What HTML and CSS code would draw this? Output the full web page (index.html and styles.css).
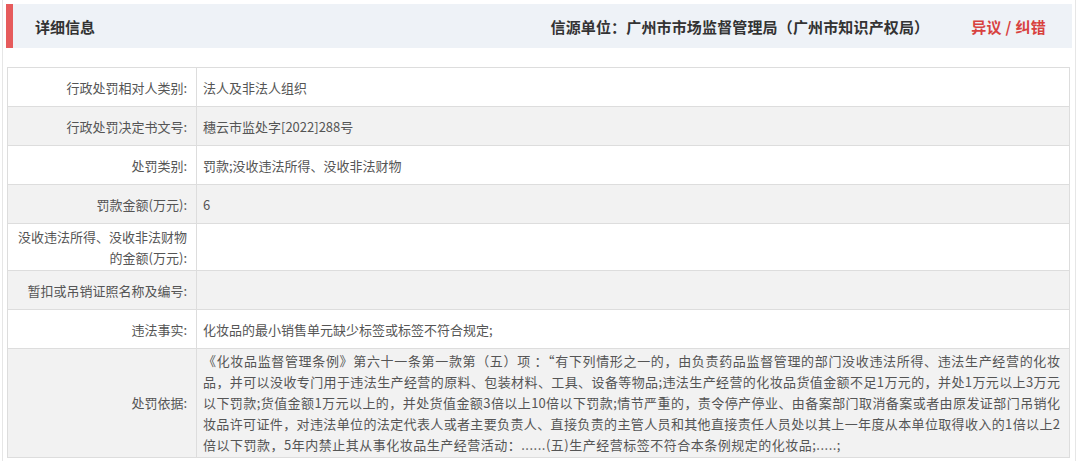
FILE: index.html
```html
<!DOCTYPE html>
<html lang="zh-CN">
<head>
<meta charset="utf-8">
<title>详细信息</title>
<link rel="stylesheet" href="styles.css">
</head>
<body>
<div class="page">
  <div class="header">
    <div class="title">详细信息</div>
    <div class="source">信源单位：广州市市场监督管理局（广州市知识产权局）</div>
    <a class="objection">异议 / 纠错</a>
  </div>
  <table class="info">
    <tr><td class="label">行政处罚相对人类别:</td><td class="value">法人及非法人组织</td></tr>
    <tr class="alt"><td class="label">行政处罚决定书文号:</td><td class="value">穗云市监处字[2022]288号</td></tr>
    <tr><td class="label">处罚类别:</td><td class="value">罚款;没收违法所得、没收非法财物</td></tr>
    <tr class="alt"><td class="label">罚款金额(万元):</td><td class="value">6</td></tr>
    <tr><td class="label">没收违法所得、没收非法财物的金额(万元):</td><td class="value"></td></tr>
    <tr class="alt"><td class="label">暂扣或吊销证照名称及编号:</td><td class="value"></td></tr>
    <tr><td class="label">违法事实:</td><td class="value">化妆品的最小销售单元缺少标签或标签不符合规定;</td></tr>
    <tr class="alt tall"><td class="label">处罚依据:</td><td class="value basis"><span class="line">《化妆品监督管理条例》第六十一条第一款第（五）项 ：“有下列情形之一的，由负责药品监督管理的部门没收违法所得、违法生产经营的化妆</span><span class="line">品，并可以没收专门用于违法生产经营的原料、包装材料、工具、设备等物品;违法生产经营的化妆品货值金额不足1万元的，并处1万元以上3万元</span><span class="line">以下罚款;货值金额1万元以上的，并处货值金额3倍以上10倍以下罚款;情节严重的，责令停产停业、由备案部门取消备案或者由原发证部门吊销化</span><span class="line">妆品许可证件，对违法单位的法定代表人或者主要负责人、直接负责的主管人员和其他直接责任人员处以其上一年度从本单位取得收入的1倍以上2</span><span class="line last">倍以下罚款，5年内禁止其从事化妆品生产经营活动：......(五)生产经营标签不符合本条例规定的化妆品;.....;</span></td></tr>
  </table>
</div>
</body>
</html>
```

FILE: styles.css
```css
html, body {
  margin: 0;
  padding: 0;
  background: #ffffff;
}

body {
  font-family: "Noto Sans CJK SC", "Microsoft YaHei", sans-serif;
  color: #555555;
}

.page {
  margin-left: 2px;
  width: 1066px;
  height: 461px;
  border-left: 1px solid #e6e6e6;
  border-right: 1px solid #e6e6e6;
  padding: 4px 3px 0 3px;
  overflow: hidden;
}

.header {
  height: 44px;
  background: #eef2f7;
  border-left: 7px solid #e65b5c;
  display: flex;
  align-items: center;
  padding-left: 22px;
  padding-right: 26px;
  font-size: 15px;
  font-weight: bold;
  color: #333333;
}

.title {
  flex: 1;
}

.source {
  margin-right: 42px;
  letter-spacing: 0.15px;
}

.objection {
  color: #d8423f;
  cursor: pointer;
  letter-spacing: 0.3px;
}

.info {
  margin-top: 19px;
  margin-left: 1px;
  width: 1063px;
  border-collapse: collapse;
  font-size: 13px;
  line-height: 21px;
}

.info td {
  border: 1px solid #dddddd;
  height: 34px;
  padding: 2px 0;
  vertical-align: middle;
}

.info tr.alt td {
  background: #f2f2f2;
}

.info td.label {
  width: 179px;
  text-align: right;
  padding-right: 9px;
  color: #555555;
}

.info td.value {
  padding-left: 6px;
  padding-right: 9px;
  color: #555555;
}

.info tr.tall td {
  padding-top: 1px;
}

.basis .line {
  display: block;
  white-space: nowrap;
  text-align: justify;
  text-align-last: justify;
}

.basis .line.last {
  text-align-last: left;
  letter-spacing: 0.5px;
}
```
